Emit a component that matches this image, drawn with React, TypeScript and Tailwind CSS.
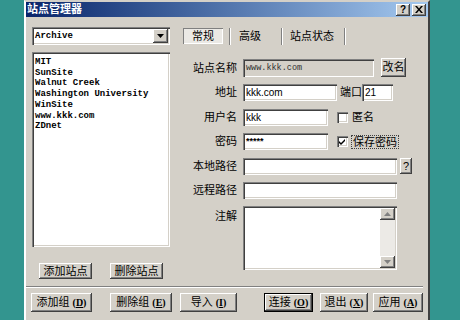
import React from "react";

const sunken =
  "shadow-[inset_1px_1px_0_#808080,inset_2px_2px_0_#404040,inset_-1px_-1px_0_#ffffff,inset_-2px_-2px_0_#d4d0c8]";
const raised =
  "shadow-[inset_-1px_-1px_0_#404040,inset_1px_1px_0_#ffffff,inset_-2px_-2px_0_#808080,inset_2px_2px_0_#d4d0c8]";

function Btn({
  children,
  className = "",
}: {
  children: React.ReactNode;
  className?: string;
}) {
  return (
    <div
      className={`flex items-center justify-center bg-[#d4d0c8] text-black text-[11px] leading-none ${raised} ${className}`}
    >
      {children}
    </div>
  );
}

function Acc({ label, k }: { label: string; k: string }) {
  return (
    <span className="flex items-center">
      <span>{label}</span>
      <span className="ml-[3px] text-[10px] font-bold font-['Liberation_Serif',serif]">
        (<span className="underline">{k}</span>)
      </span>
    </span>
  );
}

function Label({ children, top = false }: { children: React.ReactNode; top?: boolean }) {
  return (
    <div
      className={`w-[54px] shrink-0 flex justify-end text-[11px] leading-none text-black ${
        top ? "items-start pt-[5px]" : "items-center"
      }`}
    >
      {children}
    </div>
  );
}

function Field({
  className = "",
  children,
  disabled = false,
}: {
  className?: string;
  children?: React.ReactNode;
  disabled?: boolean;
}) {
  return (
    <div
      className={`flex items-center pl-[3px] ${disabled ? "bg-[#d4d0c8]" : "bg-white"} ${sunken} ${className}`}
    >
      {children}
    </div>
  );
}

function Check({ checked }: { checked?: boolean }) {
  return (
    <div className={`w-[11px] h-[11px] bg-white ${sunken} flex items-center justify-center shrink-0`}>
      {checked && (
        <svg width="7" height="7" viewBox="0 0 7 7">
          <path d="M0 3 L2 5 L6 1 L6 3 L2 7 L0 5 Z" fill="#000" />
        </svg>
      )}
    </div>
  );
}

function Arrow({ up }: { up?: boolean }) {
  return (
    <div className={`w-[15px] h-[12px] bg-[#d4d0c8] ${raised} flex items-center justify-center`}>
      <svg width="7" height="4" viewBox="0 0 7 4">
        {up ? <path d="M3.5 0 L7 4 L0 4 Z" fill="#808080" /> : <path d="M0 0 L7 0 L3.5 4 Z" fill="#808080" />}
      </svg>
    </div>
  );
}

function Sep() {
  return <div className="w-[2px] h-[17px] border-l border-[#808080] border-r border-r-white" />;
}

export default function App() {
  const sites = ["MIT", "SunSite", "Walnut Creek", "Washington University", "WinSite", "www.kkk.com", "ZDnet"];
  return (
    <div className="w-[460px] h-[320px] bg-[#33958f] overflow-hidden font-['Liberation_Sans','Noto_Sans_CJK_SC',sans-serif]">
      <div className="ml-[24px] w-[406px] h-[322px] bg-[#d4d0c8] border-t-2 border-l-2 border-t-[#d4d0c8] border-l-[#ffffff] border-r-2 border-r-[#404040] flex flex-col">
        {/* title bar */}
        <div className="h-[15px] shrink-0 bg-gradient-to-r from-[#0a246a] to-[#a6caf0] flex items-center pl-[1px] pr-[2px]">
          <span className="text-white font-bold text-[11px] leading-none">站点管理器</span>
          <div className="flex-1" />
          <div className={`w-[14px] h-[12px] bg-[#d4d0c8] ${raised} flex items-center justify-center text-[10px] font-bold leading-none`}>
            ?
          </div>
          <div className={`ml-[2px] w-[14px] h-[12px] bg-[#d4d0c8] ${raised} flex items-center justify-center`}>
            <svg width="8" height="7" viewBox="0 0 8 7">
              <path d="M0 0 L2 0 L4 2.5 L6 0 L8 0 L5 3.5 L8 7 L6 7 L4 4.5 L2 7 L0 7 L3 3.5 Z" fill="#000" />
            </svg>
          </div>
        </div>

        {/* body */}
        <div className="flex flex-row pt-[10px]">
          {/* left column */}
          <div className="ml-[6px] w-[138px] flex flex-col">
            <div className={`h-[18px] bg-white ${sunken} flex items-center pl-[3px] pr-[2px]`}>
              <span className="font-['Liberation_Mono',monospace] text-[9px] font-bold leading-none">Archive</span>
              <div className="flex-1" />
              <div className={`w-[15px] h-[14px] bg-[#d4d0c8] ${raised} flex items-center justify-center`}>
                <svg width="7" height="4" viewBox="0 0 7 4">
                  <path d="M0 0 L7 0 L3.5 4 Z" fill="#000" />
                </svg>
              </div>
            </div>
            <div className={`mt-[7px] h-[195px] bg-white ${sunken} pt-[5px] pl-[3px]`}>
              {sites.map((s) => (
                <div key={s} className="font-['Liberation_Mono',monospace] text-[9px] font-bold leading-[10.7px] text-black whitespace-pre">
                  {s}
                </div>
              ))}
            </div>
            <div className="mt-[16px] flex flex-row pl-[7px] gap-[18px]">
              <Btn className="w-[53px] h-[16px]">添加站点</Btn>
              <Btn className="w-[53px] h-[16px]">删除站点</Btn>
            </div>
          </div>

          {/* right column */}
          <div className="ml-[13px] flex flex-col">
            {/* tabs */}
            <div className="mt-[1px] h-[17px] flex flex-row items-start">
              <div className="w-[40px] h-[16px] bg-[#ebe9e5] shadow-[inset_1px_1px_0_#808080,inset_-1px_-1px_0_#ffffff] flex items-center justify-center text-[11px] leading-none">
                常规
              </div>
              <div className="ml-[6px]">
                <Sep />
              </div>
              <div className="ml-[8px] h-[16px] flex items-center text-[11px] leading-none">高级</div>
              <div className="ml-[20px]">
                <Sep />
              </div>
              <div className="ml-[7px] h-[16px] flex items-center text-[11px] leading-none">站点状态</div>
              <div className="ml-[10px]">
                <Sep />
              </div>
            </div>

            {/* row 1 */}
            <div className="mt-[14px] flex flex-row h-[18px]">
              <Label>站点名称</Label>
              <Field disabled className="ml-[6px] w-[131px] h-[18px]">
                <span className="font-['Liberation_Mono',monospace] text-[8.5px] leading-none text-[#303030]">www.kkk.com</span>
              </Field>
              <Btn className="ml-[7px] w-[25px] h-[19px] -mt-[1px]">改名</Btn>
            </div>

            {/* row 2 */}
            <div className="mt-[7px] flex flex-row h-[17px]">
              <Label>地址</Label>
              <Field className="ml-[6px] w-[94px] h-[17px]">
                <span className="text-[10px] leading-none">kkk.com</span>
              </Field>
              <div className="ml-[3px] w-[22px] flex items-center text-[11px] leading-none">端口</div>
              <Field className="w-[31px] h-[17px]">
                <span className="text-[10px] leading-none">21</span>
              </Field>
            </div>

            {/* row 3 */}
            <div className="mt-[8px] flex flex-row h-[17px]">
              <Label>用户名</Label>
              <Field className="ml-[6px] w-[85px] h-[17px]">
                <span className="text-[10px] leading-none">kkk</span>
              </Field>
              <div className="ml-[9px] flex items-center">
                <Check />
                <span className="ml-[4px] text-[11px] leading-none">匿名</span>
              </div>
            </div>

            {/* row 4 */}
            <div className="mt-[7px] flex flex-row h-[17px]">
              <Label>密码</Label>
              <Field className="ml-[6px] w-[85px] h-[17px]">
                <span className="text-[9px] leading-none font-bold">*****</span>
              </Field>
              <div className="ml-[9px] flex items-center">
                <Check checked />
                <span className="ml-[3px] px-[1px] border border-dotted border-[#404040] text-[11px] leading-[12px]">保存密码</span>
              </div>
            </div>

            {/* row 5 */}
            <div className="mt-[8px] flex flex-row h-[17px]">
              <Label>本地路径</Label>
              <Field className="ml-[6px] w-[154px] h-[17px]" />
              <Btn className="ml-[3px] w-[12px] h-[16px] text-[10px]">?</Btn>
            </div>

            {/* row 6 */}
            <div className="mt-[7px] flex flex-row h-[17px]">
              <Label>远程路径</Label>
              <Field className="ml-[6px] w-[154px] h-[17px]" />
            </div>

            {/* row 7 */}
            <div className="mt-[7px] flex flex-row h-[64px]">
              <Label top>注解</Label>
              <div className={`ml-[6px] w-[154px] h-[64px] bg-white ${sunken} flex flex-row justify-end p-[2px]`}>
                <div className="w-[15px] h-full flex flex-col bg-[#eceae6]">
                  <Arrow up />
                  <div className="flex-1" />
                  <Arrow />
                </div>
              </div>
            </div>
          </div>
        </div>

        {/* separator */}
        <div className="mt-[7px] mr-[5px] h-[2px] border-t border-t-[#808080] border-b border-b-white" />

        {/* bottom buttons */}
        <div className="mt-[5px] flex flex-row pl-[5px] pr-[5px]">
          <Btn className="w-[61px] h-[19px]">
            <Acc label="添加组" k="D" />
          </Btn>
          <Btn className="ml-[18px] w-[62px] h-[19px]">
            <Acc label="删除组" k="E" />
          </Btn>
          <Btn className="ml-[8px] w-[57px] h-[19px]">
            <Acc label="导入" k="I" />
          </Btn>
          <div className="flex-1" />
          <div className="w-[49px] h-[19px] border border-black">
            <Btn className="w-full h-full">
              <Acc label="连接" k="O" />
            </Btn>
          </div>
          <Btn className="ml-[7px] w-[48px] h-[19px]">
            <Acc label="退出" k="X" />
          </Btn>
          <Btn className="ml-[5px] w-[50px] h-[19px]">
            <Acc label="应用" k="A" />
          </Btn>
        </div>
      </div>
    </div>
  );
}
